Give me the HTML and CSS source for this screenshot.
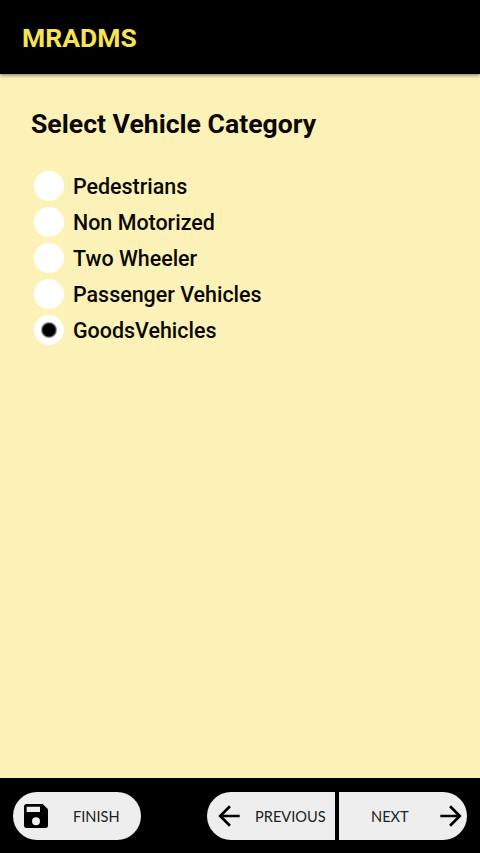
FILE: index.html
```html
<!DOCTYPE html>
<html lang="en">
<head>
    <meta charset="UTF-8">
    <meta name="viewport" content="width=device-width, initial-scale=1.0">
    <title>MRADMS</title>
    <link rel="stylesheet" href="styles.css">
</head>
<body>
    <header class="app-bar">
        <h1>MRADMS</h1>
    </header>
    <main class="content">
        <h2>Select Vehicle Category</h2>
        <form class="options">
            <label><input type="radio" name="category"><span>Pedestrians</span></label>
            <label><input type="radio" name="category"><span>Non Motorized</span></label>
            <label><input type="radio" name="category"><span>Two Wheeler</span></label>
            <label><input type="radio" name="category"><span>Passenger Vehicles</span></label>
            <label><input type="radio" name="category" checked><span>GoodsVehicles</span></label>
        </form>
    </main>
    <footer class="bottom-bar">
        <button class="btn finish">
            <svg viewBox="0 0 24 24"><path d="M17 3H5a2 2 0 0 0-2 2v14a2 2 0 0 0 2 2h14a2 2 0 0 0 2-2V7zM12 19a3 3 0 1 1 0-6 3 3 0 0 1 0 6zM15 9H5V5h10z"/></svg>
            <span>FINISH</span>
        </button>
        <div class="pager">
            <button class="btn previous">
                <svg viewBox="0 0 24 24"><path d="M20 11H7.83l5.59-5.59L12 4l-8 8 8 8 1.41-1.41L7.83 13H20z"/></svg>
                <span>PREVIOUS</span>
            </button>
            <button class="btn next">
                <span>NEXT</span>
                <svg viewBox="0 0 24 24"><path d="M12 4l-1.41 1.41L16.17 11H4v2h12.17l-5.58 5.59L12 20l8-8z"/></svg>
            </button>
        </div>
    </footer>
</body>
</html>
```

FILE: styles.css
```css
* {
    box-sizing: border-box;
}

body {
    height: 100vh;
    margin: 0;
    display: flex;
    flex-direction: column;
    background-color: #fcf2b8;
    color: #0a0800;
    font-family: Roboto, sans-serif;
}

.app-bar {
    height: 74px;
    padding: 1px 22px 0;
    display: flex;
    align-items: center;
    background-color: #000;
    box-shadow: 0 1px 4px rgba(0, 0, 0, 0.55);
}

.app-bar h1 {
    margin: 0;
    font-size: 26.5px;
    font-weight: 700;
    color: #f8e352;
}

.content {
    flex: 1;
    padding: 34px 31px 0;
}

.content h2 {
    margin: 0;
    font-size: 26.6px;
    line-height: 32px;
    font-weight: 700;
}

/* Radio list */
.options {
    margin-top: 28px;
}

.options label {
    display: flex;
    align-items: center;
    height: 36px;
    font-size: 21.45px;
    font-weight: 500;
}

.options input {
    appearance: none;
    width: 30px;
    height: 30px;
    margin: 0 9px 0 3px;
    border-radius: 50%;
    background-color: #fff;
}

.options input:checked {
    background-image: radial-gradient(circle, #000 6px, #fff 8.5px);
}

/* Bottom buttons */
.bottom-bar {
    height: 75px;
    padding: 1px 13px 0;
    display: flex;
    justify-content: space-between;
    align-items: center;
    background-color: #000;
}

.pager {
    display: flex;
    gap: 4px;
}

.btn {
    width: 128px;
    height: 48px;
    padding: 0;
    border: 0;
    display: flex;
    align-items: center;
    background-color: #eee;
    color: #222;
    font-family: Lato, sans-serif;
    font-size: 14.6px;
    cursor: pointer;
}

.btn svg {
    width: 32px;
    height: 32px;
    flex: none;
    fill: #000;
}

.finish {
    padding-left: 7px;
    gap: 21px;
    border-radius: 24px;
}

.previous {
    padding-left: 6px;
    gap: 10px;
    border-radius: 24px 0 0 24px;
}

.next {
    padding-left: 32px;
    justify-content: space-between;
    border-radius: 0 24px 24px 0;
}
```
